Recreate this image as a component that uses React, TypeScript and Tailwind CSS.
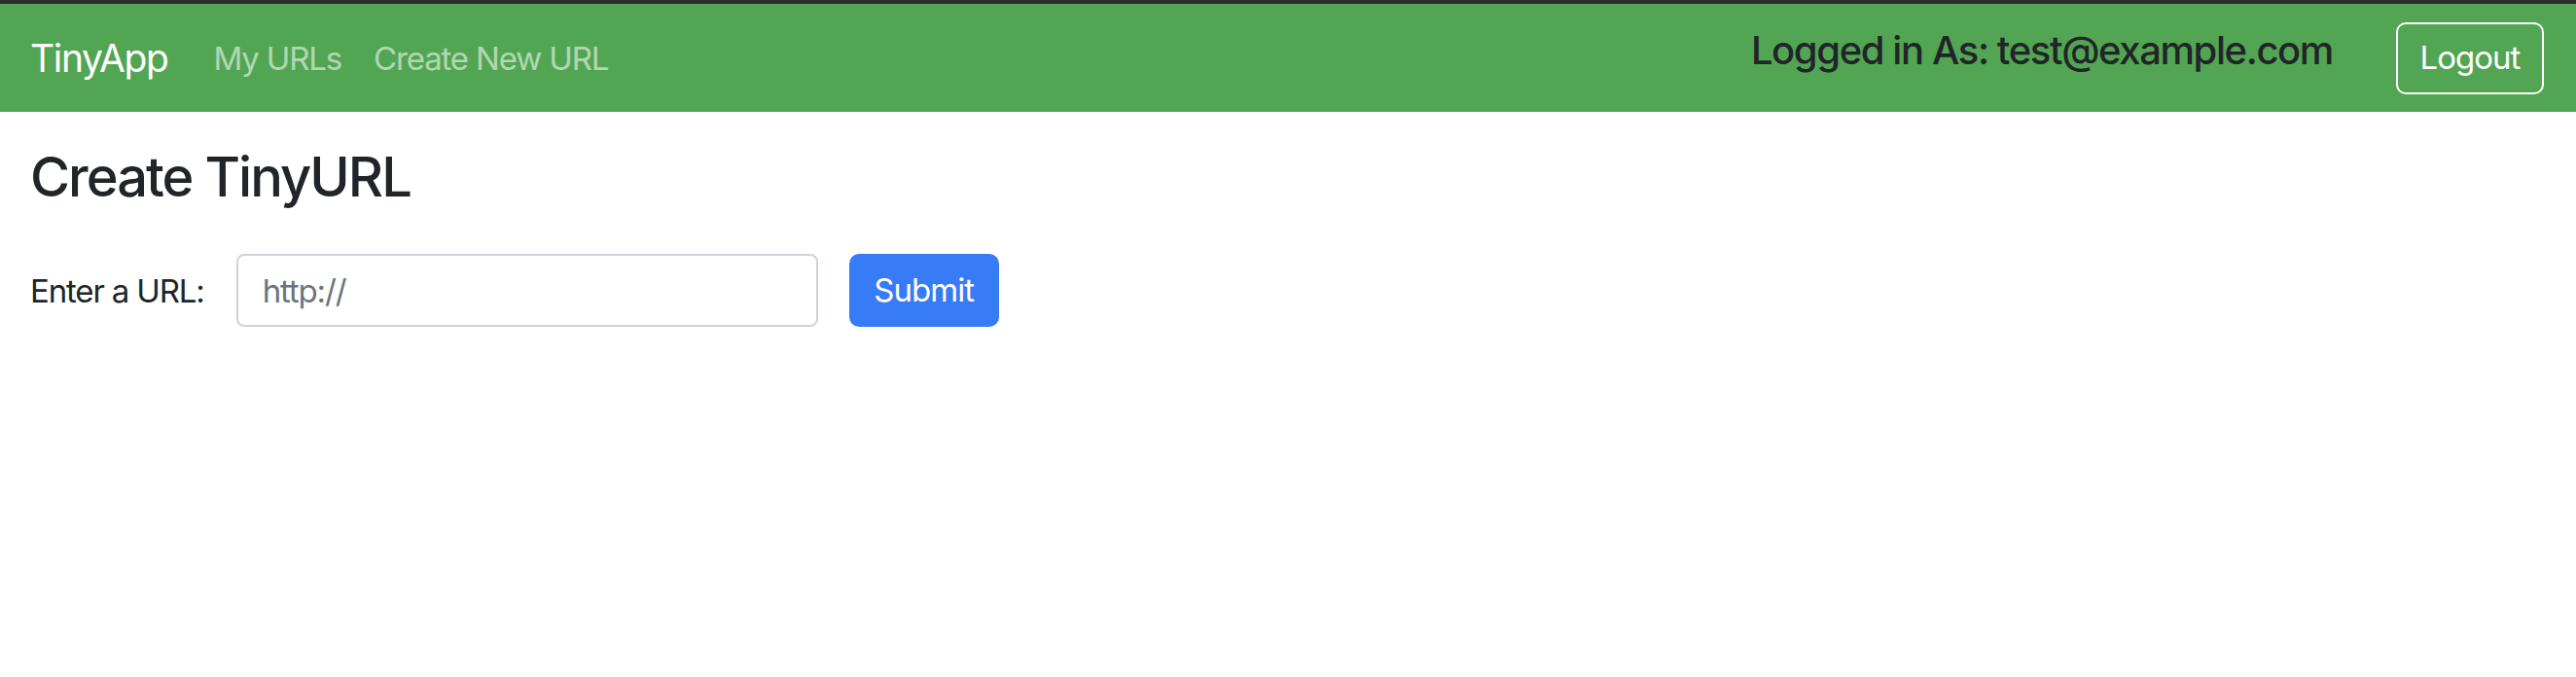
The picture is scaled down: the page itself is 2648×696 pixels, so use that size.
import React from 'react'

const font = { fontFamily: 'Inter, "Liberation Sans", sans-serif' }

function Navbar() {
  return (
    <nav className="flex h-[111px] items-center bg-[#52a552] pl-[31px] pr-[33px]">
      <a className="text-[39px] leading-[60px] tracking-[-0.035em] text-white" href="#">
        TinyApp
      </a>
      <div className="ml-[47px] flex items-center gap-[33px]">
        <a className="text-[33px] leading-[50px] tracking-[-0.035em] text-white/55" href="#">
          My URLs
        </a>
        <a className="text-[33px] leading-[50px] tracking-[-0.035em] text-white/55" href="#">
          Create New URL
        </a>
      </div>
      <div className="ml-auto flex items-center">
        <h4 className="pb-[16px] text-[40px] font-medium leading-[50px] tracking-[-0.035em] text-[#212529]">
          Logged in As: test@example.com
        </h4>
        <button className="ml-[65px] h-[74px] w-[152px] rounded-[10px] border-2 border-white text-[33px] tracking-[-0.03em] text-white">
          Logout
        </button>
      </div>
    </nav>
  )
}

export default function App() {
  return (
    <div className="min-h-screen bg-white text-[#212529]" style={font}>
      <div className="h-[4px] bg-[#2d2d2d]" />
      <Navbar />
      <main className="px-[31px]">
        <h1 className="mt-[27px] text-[56px] font-medium leading-[80px] tracking-[-0.035em]">
          Create TinyURL
        </h1>
        <form className="mt-[39px] flex items-center" onSubmit={(e) => e.preventDefault()}>
          <label className="text-[33px] leading-[50px] tracking-[-0.035em]">Enter a URL:</label>
          <input
            className="ml-[33px] h-[75px] w-[598px] rounded-[8px] border-2 border-[#ced4da] px-[25px] text-[33px] tracking-[-0.035em] placeholder:text-[#6c757d] outline-none"
            placeholder="http://"
            type="text"
          />
          <button
            type="submit"
            className="ml-[32px] h-[75px] w-[154px] rounded-[10px] bg-[#377bf6] text-[33px] tracking-[-0.03em] text-white"
          >
            Submit
          </button>
        </form>
      </main>
    </div>
  )
}
